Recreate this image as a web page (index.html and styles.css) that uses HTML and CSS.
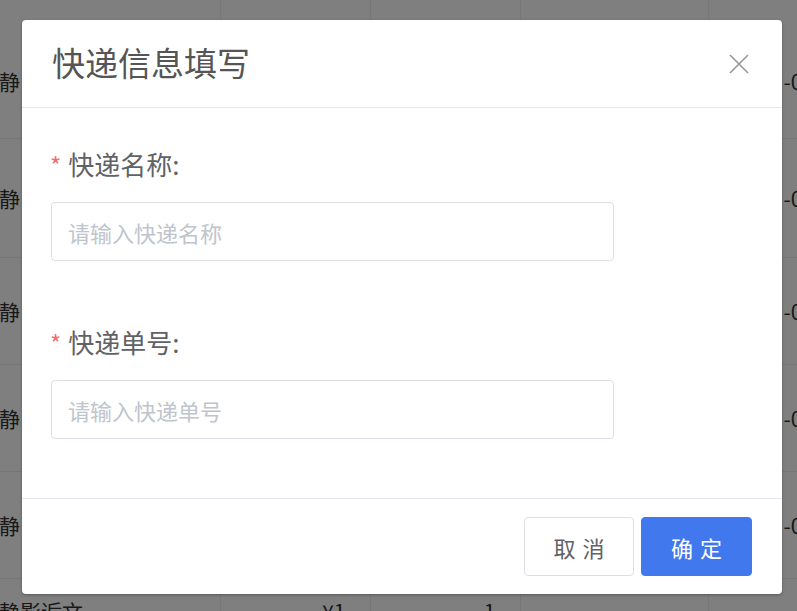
FILE: index.html
```html
<!DOCTYPE html>
<html lang="zh-CN">
<head>
    <meta charset="UTF-8">
    <meta name="viewport" content="width=device-width, initial-scale=1.0">
    <title>快递信息填写</title>
    <link rel="stylesheet" href="styles.css">
</head>
<body>
    <div class="page">
        <table class="list">
            <colgroup>
                <col class="w1"><col class="w2"><col class="w3"><col class="w4"><col class="w5">
            </colgroup>
            <tr class="row-a">
                <td class="c1">沉静</td><td></td><td></td><td></td><td class="c5">-0</td>
            </tr>
            <tr class="row-b">
                <td class="c1">沉静</td><td></td><td></td><td></td><td class="c5">-0</td>
            </tr>
            <tr class="row-c">
                <td class="c1">沉静</td><td></td><td></td><td></td><td class="c5">-0</td>
            </tr>
            <tr class="row-c">
                <td class="c1">沉静</td><td></td><td></td><td></td><td class="c5">-0</td>
            </tr>
            <tr class="row-c">
                <td class="c1">沉静</td><td></td><td></td><td></td><td class="c5">-0</td>
            </tr>
            <tr class="row-last">
                <td class="c1">沉静影逅文</td><td class="num">¥1</td><td class="num">1</td><td></td><td></td>
            </tr>
        </table>

        <div class="mask">
            <div class="dialog">
                <div class="dialog-header">
                    <span class="dialog-title">快递信息填写</span>
                    <button class="dialog-close" type="button">
                        <svg width="22" height="22" viewBox="0 0 22 22">
                            <path d="M2 2 L20 20 M20 2 L2 20" stroke="#9a9a9a" stroke-width="1.7" fill="none"/>
                        </svg>
                    </button>
                </div>

                <div class="dialog-body">
                    <div class="form-item">
                        <label class="form-label"><span class="req">*</span>快递名称:</label>
                        <input class="form-input" type="text" placeholder="请输入快递名称">
                    </div>
                    <div class="form-item">
                        <label class="form-label"><span class="req">*</span>快递单号:</label>
                        <input class="form-input" type="text" placeholder="请输入快递单号">
                    </div>
                </div>

                <div class="dialog-footer">
                    <button class="btn" type="button">取消</button>
                    <button class="btn btn-primary" type="button">确定</button>
                </div>
            </div>
        </div>
    </div>
</body>
</html>
```

FILE: styles.css
```css
body {
    margin: 0;
    padding: 0;
    background-color: #fff;
    font-family: "Noto Sans CJK SC", "Noto Sans", sans-serif;
}

.page {
    position: relative;
    height: 611px;
    overflow: hidden;
}

/* таблица под маской */
.list {
    border-collapse: collapse;
    table-layout: fixed;
    width: 920px;
    margin-left: -40px;
    margin-top: -20px;
    font-size: 21px;
    line-height: 30px;
    color: #303133;
}

.list .w1 { width: 260px; }
.list .w2 { width: 150px; }
.list .w3 { width: 150px; }
.list .w4 { width: 188px; }
.list .w5 { width: 172px; }

.list td {
    border-bottom: 1px solid #ebeef5;
    border-right: 1px solid #ebeef5;
    padding: 0;
    white-space: nowrap;
    overflow: hidden;
}

.list .c1 { padding-left: 18px; }
.list .c5 { padding-left: 75px; }

.list .num {
    text-align: right;
    padding-right: 24px;
}

.row-a td {
    height: 116px;
    vertical-align: bottom;
    padding-bottom: 42px;
}
.row-b td { height: 118px; }
.row-c td { height: 106px; }
.row-last td {
    height: 106px;
    vertical-align: top;
    padding-top: 17px;
}

.mask {
    position: absolute;
    top: 0;
    left: 0;
    right: 0;
    bottom: 0;
    background: rgba(0, 0, 0, 0.5);
}

.dialog {
    width: 760px;
    margin: 20px 0 0 22px;
    background: #fff;
    border-radius: 4px;
    box-shadow: 0 1px 3px rgba(0, 0, 0, 0.3);
}

.dialog-header {
    height: 87px;
    display: flex;
    align-items: center;
    justify-content: space-between;
    padding: 0 32px 0 30px;
    border-bottom: 1px solid #e4e7ed;
}

.dialog-title {
    font-size: 33px;
    color: #555;
    line-height: 1;
    margin-top: -2px;
}

.dialog-close {
    background: none;
    border: none;
    padding: 0;
    width: 22px;
    height: 22px;
    cursor: pointer;
}

.dialog-close svg {
    display: block;
}

.dialog-body {
    padding: 39px 30px 59px 29px;
}

.form-item + .form-item {
    margin-top: 64px;
}

.form-label {
    display: block;
    font-size: 26px;
    line-height: 34px;
    color: #606266;
    margin: 0 0 20px -1px;
}

.form-label .req {
    color: #f56c6c;
    margin-right: 7px;
    font-size: 24px;
}

.form-input {
    display: block;
    box-sizing: border-box;
    width: 563px;
    height: 59px;
    border: 1px solid #dcdfe6;
    border-radius: 4px;
    padding: 0 16px;
    font-family: inherit;
    font-size: 22px;
    color: #606266;
    outline: none;
}

.form-input::placeholder {
    color: #c0c4cc;
}

.dialog-footer {
    display: flex;
    justify-content: flex-end;
    gap: 7px;
    padding: 18px 30px 18px 0;
    border-top: 1px solid #e4e7ed;
}

.btn {
    width: 110px;
    height: 59px;
    border: 1px solid #dcdfe6;
    border-radius: 4px;
    background: #fff;
    color: #606266;
    font-family: inherit;
    font-size: 22px;
    letter-spacing: 7px;
    padding: 0 0 0 7px;
    cursor: pointer;
}

.btn-primary {
    width: 111px;
    background: #4178ee;
    border-color: #4178ee;
    color: #fff;
}
```
